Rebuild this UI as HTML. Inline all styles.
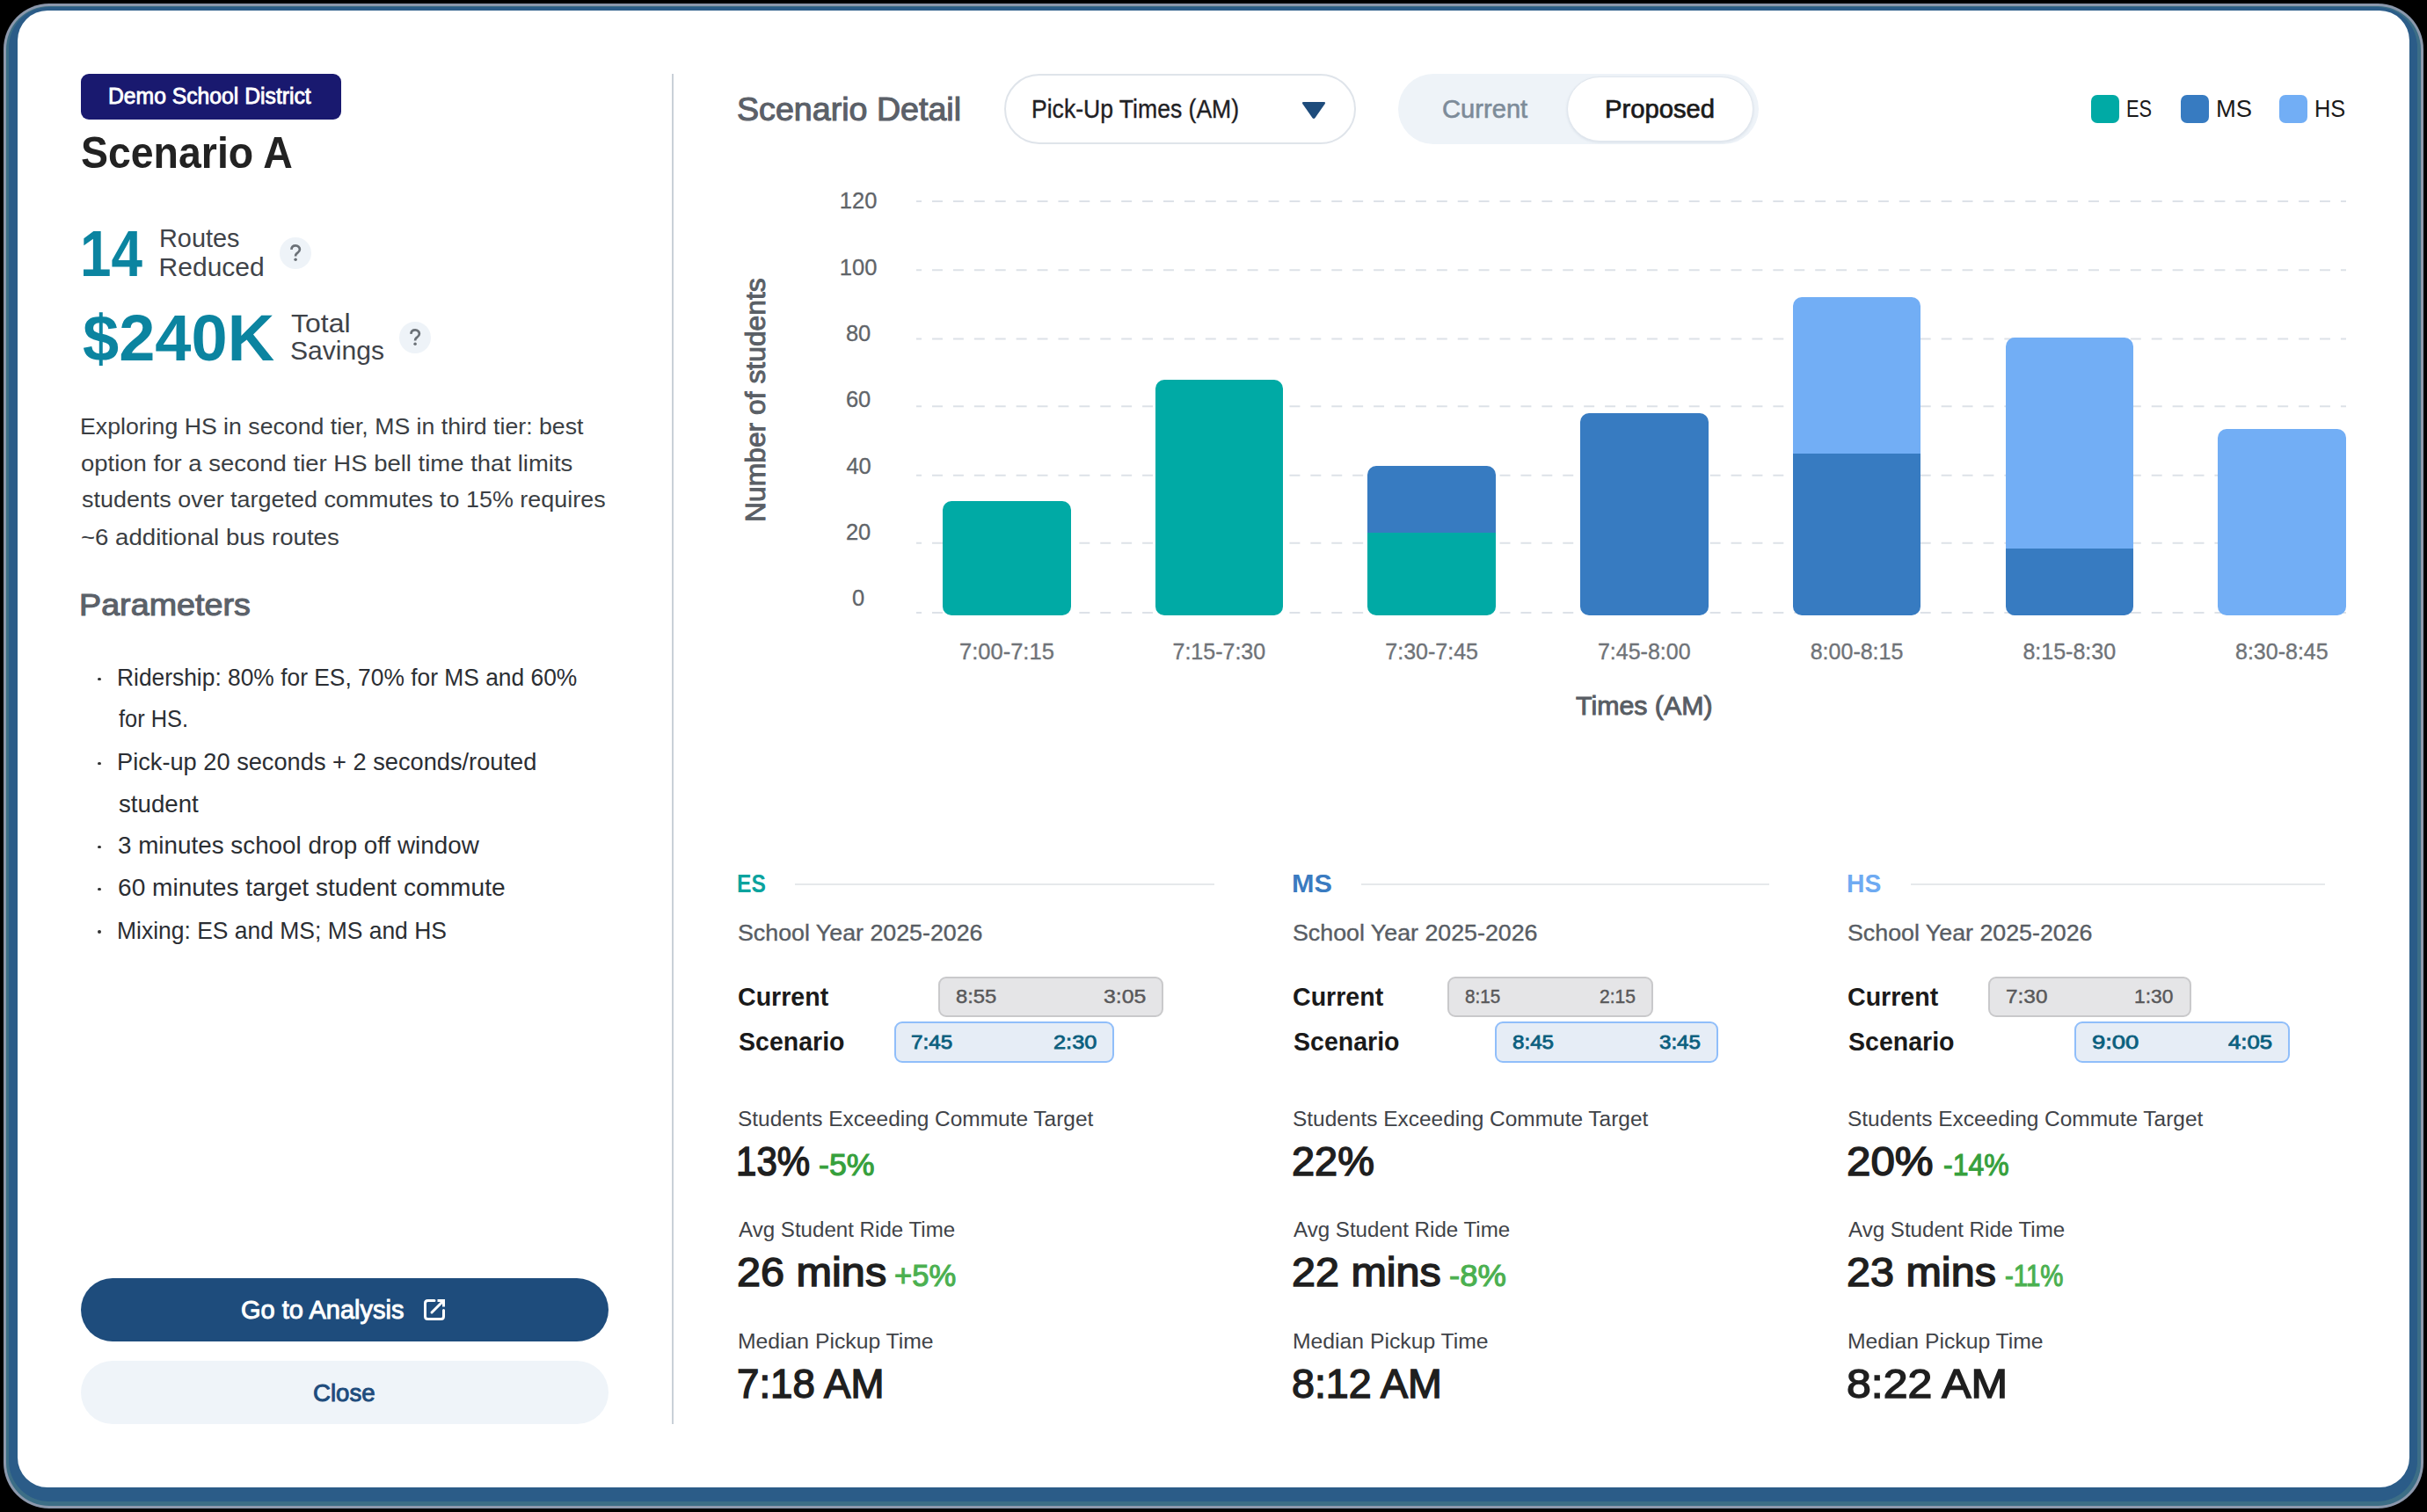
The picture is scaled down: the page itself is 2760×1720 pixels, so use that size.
<!DOCTYPE html>
<html><head><meta charset="utf-8"><style>
html,body{margin:0;padding:0;width:2760px;height:1720px;overflow:hidden;background:#000;}
body{position:relative;font-family:"Liberation Sans", sans-serif;}
</style></head><body>
<div style="position:absolute;left:4px;top:4px;width:2752px;height:1712px;border-radius:52px;background:#8c98ac;"></div>
<div style="position:absolute;left:7px;top:6.5px;width:2746px;height:1706.5px;border-radius:49px;background:#3c6e86;"></div>
<div style="position:absolute;left:10px;top:8px;width:2739px;height:1700px;border-radius:46px;background:#2b5c88;"></div>
<div style="position:absolute;left:20px;top:12px;width:2720px;height:1680px;background:#ffffff;border-radius:34px;"></div>
<div style="position:absolute;left:92px;top:84px;width:296px;height:52px;background:#19196f;border-radius:9px;"></div>
<div style="position:absolute;left:318px;top:270px;width:36px;height:36px;border-radius:18px;background:#eef3f8;"></div>
<div style="position:absolute;left:454px;top:366px;width:36px;height:36px;border-radius:18px;background:#eef3f8;"></div>
<svg style="position:absolute;left:324px;top:276px" width="24" height="24" viewBox="-12 -12 24 24"><path d="M -4.6 -4.2 C -4.4 -7.4 -2.2 -8.6 0.2 -8.6 C 3 -8.6 4.9 -6.7 4.9 -4.2 C 4.9 -1.6 2.6 -0.6 1.2 0.6 C 0.3 1.4 0.1 2.3 0.1 3.6" fill="none" stroke="#6b7177" stroke-width="2.7" stroke-linecap="butt"/><circle cx="0.1" cy="7.3" r="1.75" fill="#6b7177"/></svg>
<svg style="position:absolute;left:460px;top:371.8px" width="24" height="24" viewBox="-12 -12 24 24"><path d="M -4.6 -4.2 C -4.4 -7.4 -2.2 -8.6 0.2 -8.6 C 3 -8.6 4.9 -6.7 4.9 -4.2 C 4.9 -1.6 2.6 -0.6 1.2 0.6 C 0.3 1.4 0.1 2.3 0.1 3.6" fill="none" stroke="#6b7177" stroke-width="2.7" stroke-linecap="butt"/><circle cx="0.1" cy="7.3" r="1.75" fill="#6b7177"/></svg>
<div style="position:absolute;left:111.3px;top:770.5999999999999px;width:3.4px;height:3.4px;border-radius:2px;background:#333;"></div>
<div style="position:absolute;left:111.3px;top:866.5999999999999px;width:3.4px;height:3.4px;border-radius:2px;background:#333;"></div>
<div style="position:absolute;left:111.3px;top:961.8px;width:3.4px;height:3.4px;border-radius:2px;background:#333;"></div>
<div style="position:absolute;left:111.3px;top:1009.9px;width:3.4px;height:3.4px;border-radius:2px;background:#333;"></div>
<div style="position:absolute;left:111.3px;top:1058.3px;width:3.4px;height:3.4px;border-radius:2px;background:#333;"></div>
<div style="position:absolute;left:92px;top:1454px;width:600px;height:72px;background:#1e4c7c;border-radius:36px;"></div>
<svg style="position:absolute;left:480px;top:1476px" width="28" height="28" viewBox="0 0 28 28">
<path d="M14 3.5 H6.5 Q3.5 3.5 3.5 6.5 V21.5 Q3.5 24.5 6.5 24.5 H21.5 Q24.5 24.5 24.5 21.5 V14.5" fill="none" stroke="#fff" stroke-width="3" stroke-linecap="round"/>
<path d="M17.5 3.5 H24.5 V10.5" fill="none" stroke="#fff" stroke-width="3" stroke-linecap="butt"/>
<path d="M11 17 L23.5 4.5" fill="none" stroke="#fff" stroke-width="3" stroke-linecap="round"/>
</svg>
<div style="position:absolute;left:92px;top:1548px;width:600px;height:72px;background:#eff4f9;border-radius:36px;"></div>
<div style="position:absolute;left:764px;top:84px;width:2px;height:1536px;background:#c9d0d8;border-radius:0px;"></div>
<div style="position:absolute;left:1142px;top:84px;width:396px;height:76px;border:2px solid #dfe4ea;border-radius:40px;background:#fff;"></div>
<svg style="position:absolute;left:1478px;top:112px" width="32" height="26" viewBox="0 0 32 26"><path d="M4.5 4 H27.5 Q30 4 28.6 6.2 L17.6 22 Q16 24.2 14.4 22 L3.4 6.2 Q2 4 4.5 4 Z" fill="#1e4c7c"/></svg>
<div style="position:absolute;left:1590px;top:84px;width:410px;height:80px;background:#eef3f8;border-radius:40px;"></div>
<div style="position:absolute;left:1781.5px;top:87px;width:210px;height:71.5px;border:1.5px solid #e1e7ee;border-radius:37px;background:#fff;box-shadow:0 1px 3px rgba(30,60,100,0.10);"></div>
<div style="position:absolute;left:2378px;top:108px;width:32px;height:32px;background:#00aaa5;border-radius:7px;"></div>
<div style="position:absolute;left:2480px;top:108px;width:32px;height:32px;background:#377bc1;border-radius:7px;"></div>
<div style="position:absolute;left:2592px;top:108px;width:32px;height:32px;background:#72aef5;border-radius:7px;"></div>
<svg style="position:absolute;left:1042px;top:227px" width="1626" height="480" viewBox="0 0 1626 480"><g stroke="#dde2e8" stroke-width="2" stroke-dasharray="11.954 11.955" stroke-dashoffset="5.9" fill="none"><line x1="0" y1="2.00" x2="1626" y2="2.00" /><line x1="0" y1="80.20" x2="1626" y2="80.20" /><line x1="0" y1="158.40" x2="1626" y2="158.40" /><line x1="0" y1="235.30" x2="1626" y2="235.30" /><line x1="0" y1="313.70" x2="1626" y2="313.70" /><line x1="0" y1="390.80" x2="1626" y2="390.80" /><line x1="0" y1="470.00" x2="1626" y2="470.00" /></g></svg>
<div style="position:absolute;left:1072.2px;top:569.6px;width:145.6px;height:130.39999999999998px;border-radius:10px;overflow:hidden"><div style="position:absolute;left:0;top:0.0px;width:100%;height:130.39999999999998px;background:#00aaa5"></div></div>
<div style="position:absolute;left:1313.6px;top:431.8px;width:145.6px;height:268.2px;border-radius:10px;overflow:hidden"><div style="position:absolute;left:0;top:0.0px;width:100%;height:268.2px;background:#00aaa5"></div></div>
<div style="position:absolute;left:1555.4px;top:530px;width:145.6px;height:170px;border-radius:10px;overflow:hidden"><div style="position:absolute;left:0;top:0px;width:100%;height:75.60000000000002px;background:#377bc1"></div><div style="position:absolute;left:0;top:75.60000000000002px;width:100%;height:94.39999999999998px;background:#00aaa5"></div></div>
<div style="position:absolute;left:1797px;top:470.1px;width:145.6px;height:229.89999999999998px;border-radius:10px;overflow:hidden"><div style="position:absolute;left:0;top:0.0px;width:100%;height:229.89999999999998px;background:#377bc1"></div></div>
<div style="position:absolute;left:2038.8px;top:338px;width:145.6px;height:362px;border-radius:10px;overflow:hidden"><div style="position:absolute;left:0;top:0px;width:100%;height:178px;background:#72aef5"></div><div style="position:absolute;left:0;top:178px;width:100%;height:184px;background:#377bc1"></div></div>
<div style="position:absolute;left:2280.5px;top:383.8px;width:145.6px;height:316.2px;border-radius:10px;overflow:hidden"><div style="position:absolute;left:0;top:0.0px;width:100%;height:239.90000000000003px;background:#72aef5"></div><div style="position:absolute;left:0;top:239.90000000000003px;width:100%;height:76.29999999999995px;background:#377bc1"></div></div>
<div style="position:absolute;left:2522.1px;top:488.1px;width:145.6px;height:211.89999999999998px;border-radius:10px;overflow:hidden"><div style="position:absolute;left:0;top:0.0px;width:100%;height:211.89999999999998px;background:#72aef5"></div></div>
<div style="position:absolute;left:904px;top:1005px;width:477.29999999999995px;height:2px;background:#e6e8eb;border-radius:0px;"></div>
<div style="position:absolute;left:1066.5px;top:1111px;width:256.0999999999999px;height:46px;box-sizing:border-box;border:2px solid #c9c9cb;border-radius:9px;background:#e5e5e7"></div>
<div style="position:absolute;left:1016.5px;top:1162.3px;width:250.20000000000005px;height:47px;box-sizing:border-box;border:2px solid #90befa;border-radius:9px;background:#e6edf6"></div>
<div style="position:absolute;left:1547.6px;top:1005px;width:464.9000000000001px;height:2px;background:#e6e8eb;border-radius:0px;"></div>
<div style="position:absolute;left:1645.8px;top:1111px;width:234.4000000000001px;height:46px;box-sizing:border-box;border:2px solid #c9c9cb;border-radius:9px;background:#e5e5e7"></div>
<div style="position:absolute;left:1699.7px;top:1162.3px;width:254.0999999999999px;height:47px;box-sizing:border-box;border:2px solid #90befa;border-radius:9px;background:#e6edf6"></div>
<div style="position:absolute;left:2172.7px;top:1005px;width:471.0px;height:2px;background:#e6e8eb;border-radius:0px;"></div>
<div style="position:absolute;left:2261.2px;top:1111px;width:230.4000000000001px;height:46px;box-sizing:border-box;border:2px solid #c9c9cb;border-radius:9px;background:#e5e5e7"></div>
<div style="position:absolute;left:2359.4px;top:1162.3px;width:244.19999999999982px;height:47px;box-sizing:border-box;border:2px solid #90befa;border-radius:9px;background:#e6edf6"></div>
<div style="position:absolute;left:123.05px;top:96.78px;font-size:25.3px;line-height:25.3px;font-weight:400;color:#ffffff;white-space:pre;-webkit-text-stroke:0.85px #ffffff;transform:scaleX(0.9768);transform-origin:0 0;">Demo School District</div>
<div style="position:absolute;left:92.48px;top:149.04px;font-size:50.4px;line-height:50.4px;font-weight:700;color:#222222;white-space:pre;transform:scaleX(0.9215);transform-origin:0 0;">Scenario A</div>
<div style="position:absolute;left:90.53px;top:252.67px;font-size:73.4px;line-height:73.4px;font-weight:700;color:#0b84a0;white-space:pre;transform:scaleX(0.8687);transform-origin:0 0;">14</div>
<div style="position:absolute;left:180.68px;top:256.41px;font-size:30px;line-height:30px;font-weight:400;color:#3f4349;white-space:pre;transform:scaleX(0.9625);transform-origin:0 0;">Routes</div>
<div style="position:absolute;left:180.60px;top:289.00px;font-size:30px;line-height:30px;font-weight:400;color:#3f4349;white-space:pre;transform:scaleX(1.0000);transform-origin:0 0;">Reduced</div>
<div style="position:absolute;left:94.00px;top:347.96px;font-size:74px;line-height:74px;font-weight:700;color:#0b84a0;white-space:pre;transform:scaleX(1.0004);transform-origin:0 0;">$240K</div>
<div style="position:absolute;left:331.00px;top:352.81px;font-size:30px;line-height:30px;font-weight:400;color:#3f4349;white-space:pre;transform:scaleX(1.0664);transform-origin:0 0;">Total</div>
<div style="position:absolute;left:330.00px;top:384.11px;font-size:30px;line-height:30px;font-weight:400;color:#3f4349;white-space:pre;transform:scaleX(1.0026);transform-origin:0 0;">Savings</div>
<div style="position:absolute;left:90.59px;top:471.57px;font-size:26.5px;line-height:26.5px;font-weight:400;color:#3a3e43;white-space:pre;transform:scaleX(1.0068);transform-origin:0 0;">Exploring HS in second tier, MS in third tier: best</div>
<div style="position:absolute;left:91.56px;top:514.07px;font-size:26.5px;line-height:26.5px;font-weight:400;color:#3a3e43;white-space:pre;transform:scaleX(1.0375);transform-origin:0 0;">option for a second tier HS bell time that limits</div>
<div style="position:absolute;left:92.60px;top:555.37px;font-size:26.5px;line-height:26.5px;font-weight:400;color:#3a3e43;white-space:pre;transform:scaleX(1.0160);transform-origin:0 0;">students over targeted commutes to 15% requires</div>
<div style="position:absolute;left:91.56px;top:597.57px;font-size:26.5px;line-height:26.5px;font-weight:400;color:#3a3e43;white-space:pre;transform:scaleX(1.0410);transform-origin:0 0;">~6 additional bus routes</div>
<div style="position:absolute;left:90.49px;top:671.30px;font-size:35.8px;line-height:35.8px;font-weight:400;color:#5b6169;white-space:pre;-webkit-text-stroke:1.1px #5b6169;transform:scaleX(1.0532);transform-origin:0 0;">Parameters</div>
<div style="position:absolute;left:132.89px;top:756.94px;font-size:27.6px;line-height:27.6px;font-weight:400;color:#2b2e33;white-space:pre;transform:scaleX(0.9556);transform-origin:0 0;">Ridership: 80% for ES, 70% for MS and 60%</div>
<div style="position:absolute;left:134.80px;top:804.04px;font-size:27.6px;line-height:27.6px;font-weight:400;color:#2b2e33;white-space:pre;transform:scaleX(0.9204);transform-origin:0 0;">for HS.</div>
<div style="position:absolute;left:132.83px;top:852.94px;font-size:27.6px;line-height:27.6px;font-weight:400;color:#2b2e33;white-space:pre;transform:scaleX(0.9862);transform-origin:0 0;">Pick-up 20 seconds + 2 seconds/routed</div>
<div style="position:absolute;left:134.80px;top:900.54px;font-size:27.6px;line-height:27.6px;font-weight:400;color:#2b2e33;white-space:pre;transform:scaleX(1.0028);transform-origin:0 0;">student</div>
<div style="position:absolute;left:133.79px;top:948.14px;font-size:27.6px;line-height:27.6px;font-weight:400;color:#2b2e33;white-space:pre;transform:scaleX(1.0080);transform-origin:0 0;">3 minutes school drop off window</div>
<div style="position:absolute;left:133.78px;top:996.24px;font-size:27.6px;line-height:27.6px;font-weight:400;color:#2b2e33;white-space:pre;transform:scaleX(1.0186);transform-origin:0 0;">60 minutes target student commute</div>
<div style="position:absolute;left:132.88px;top:1044.64px;font-size:27.6px;line-height:27.6px;font-weight:400;color:#2b2e33;white-space:pre;transform:scaleX(0.9587);transform-origin:0 0;">Mixing: ES and MS; MS and HS</div>
<div style="position:absolute;left:274.00px;top:1475.75px;font-size:29px;line-height:29px;font-weight:400;color:#ffffff;white-space:pre;-webkit-text-stroke:0.95px #ffffff;transform:scaleX(1.0002);transform-origin:0 0;">Go to Analysis</div>
<div style="position:absolute;left:355.63px;top:1569.87px;font-size:28.5px;line-height:28.5px;font-weight:400;color:#1e4c7c;white-space:pre;-webkit-text-stroke:0.95px #1e4c7c;transform:scaleX(0.9702);transform-origin:0 0;">Close</div>
<div style="position:absolute;left:838.48px;top:105.68px;font-size:37px;line-height:37px;font-weight:400;color:#5b6068;white-space:pre;-webkit-text-stroke:1.1px #5b6068;transform:scaleX(1.0166);transform-origin:0 0;">Scenario Detail</div>
<div style="position:absolute;left:1173.47px;top:109.65px;font-size:29px;line-height:29px;font-weight:400;color:#1f2124;white-space:pre;-webkit-text-stroke:0.35px #1f2124;transform:scaleX(0.9158);transform-origin:0 0;">Pick-Up Times (AM)</div>
<div style="position:absolute;left:1640.01px;top:109.03px;font-size:29.5px;line-height:29.5px;font-weight:400;color:#7d8b99;white-space:pre;-webkit-text-stroke:0.6px #7d8b99;transform:scaleX(0.9880);transform-origin:0 0;">Current</div>
<div style="position:absolute;left:1825.02px;top:109.03px;font-size:29.5px;line-height:29.5px;font-weight:400;color:#1a1a1a;white-space:pre;-webkit-text-stroke:0.7px #1a1a1a;transform:scaleX(0.9904);transform-origin:0 0;">Proposed</div>
<div style="position:absolute;left:2418.44px;top:110.10px;font-size:28px;line-height:28px;font-weight:400;color:#1a1a1a;white-space:pre;transform:scaleX(0.7786);transform-origin:0 0;">ES</div>
<div style="position:absolute;left:2519.84px;top:110.10px;font-size:28px;line-height:28px;font-weight:400;color:#1a1a1a;white-space:pre;transform:scaleX(0.9790);transform-origin:0 0;">MS</div>
<div style="position:absolute;left:2632.19px;top:110.10px;font-size:28px;line-height:28px;font-weight:400;color:#1a1a1a;white-space:pre;transform:scaleX(0.9056);transform-origin:0 0;">HS</div>
<div style="position:absolute;left:954.82px;top:216.31px;font-size:25.5px;line-height:25.5px;font-weight:400;color:#606469;white-space:pre;-webkit-text-stroke:0.3px #606469;">120</div>
<div style="position:absolute;left:954.82px;top:291.61px;font-size:25.5px;line-height:25.5px;font-weight:400;color:#606469;white-space:pre;-webkit-text-stroke:0.3px #606469;">100</div>
<div style="position:absolute;left:961.91px;top:366.91px;font-size:25.5px;line-height:25.5px;font-weight:400;color:#606469;white-space:pre;-webkit-text-stroke:0.3px #606469;">80</div>
<div style="position:absolute;left:961.91px;top:442.21px;font-size:25.5px;line-height:25.5px;font-weight:400;color:#606469;white-space:pre;-webkit-text-stroke:0.3px #606469;">60</div>
<div style="position:absolute;left:962.41px;top:517.51px;font-size:25.5px;line-height:25.5px;font-weight:400;color:#606469;white-space:pre;-webkit-text-stroke:0.3px #606469;">40</div>
<div style="position:absolute;left:961.91px;top:592.81px;font-size:25.5px;line-height:25.5px;font-weight:400;color:#606469;white-space:pre;-webkit-text-stroke:0.3px #606469;">20</div>
<div style="position:absolute;left:969.00px;top:668.11px;font-size:25.5px;line-height:25.5px;font-weight:400;color:#606469;white-space:pre;-webkit-text-stroke:0.3px #606469;">0</div>
<div style="position:absolute;left:843.96px;top:594.25px;font-size:31px;line-height:31px;font-weight:400;color:#5a5f66;white-space:pre;transform-origin:0 0;transform:rotate(-90deg) scaleX(1.0268);-webkit-text-stroke:0.95px #5a5f66;">Number of students</div>
<div style="position:absolute;left:1091.03px;top:728.64px;font-size:25px;line-height:25px;font-weight:400;color:#6f7378;white-space:pre;-webkit-text-stroke:0.35px #6f7378;transform:scaleX(1.0209);transform-origin:0 0;">7:00-7:15</div>
<div style="position:absolute;left:1333.53px;top:728.64px;font-size:25px;line-height:25px;font-weight:400;color:#6f7378;white-space:pre;-webkit-text-stroke:0.35px #6f7378;">7:15-7:30</div>
<div style="position:absolute;left:1575.33px;top:728.64px;font-size:25px;line-height:25px;font-weight:400;color:#6f7378;white-space:pre;-webkit-text-stroke:0.35px #6f7378;">7:30-7:45</div>
<div style="position:absolute;left:1816.93px;top:728.64px;font-size:25px;line-height:25px;font-weight:400;color:#6f7378;white-space:pre;-webkit-text-stroke:0.35px #6f7378;">7:45-8:00</div>
<div style="position:absolute;left:2058.73px;top:728.64px;font-size:25px;line-height:25px;font-weight:400;color:#6f7378;white-space:pre;-webkit-text-stroke:0.35px #6f7378;">8:00-8:15</div>
<div style="position:absolute;left:2300.43px;top:728.64px;font-size:25px;line-height:25px;font-weight:400;color:#6f7378;white-space:pre;-webkit-text-stroke:0.35px #6f7378;">8:15-8:30</div>
<div style="position:absolute;left:2542.03px;top:728.64px;font-size:25px;line-height:25px;font-weight:400;color:#6f7378;white-space:pre;-webkit-text-stroke:0.35px #6f7378;">8:30-8:45</div>
<div style="position:absolute;left:1792.25px;top:788.40px;font-size:30px;line-height:30px;font-weight:400;color:#585d64;white-space:pre;-webkit-text-stroke:0.95px #585d64;transform:scaleX(1.0106);transform-origin:0 0;">Times (AM)</div>
<div style="position:absolute;left:838.16px;top:990.31px;font-size:30px;line-height:30px;font-weight:700;color:#0aa39e;white-space:pre;transform:scaleX(0.8214);transform-origin:0 0;">ES</div>
<div style="position:absolute;left:838.73px;top:1048.84px;font-size:25px;line-height:25px;font-weight:400;color:#585d64;white-space:pre;-webkit-text-stroke:0.35px #585d64;transform:scaleX(1.0712);transform-origin:0 0;">School Year 2025-2026</div>
<div style="position:absolute;left:838.81px;top:1119.92px;font-size:28.8px;line-height:28.8px;font-weight:700;color:#1a1a1a;white-space:pre;transform:scaleX(0.9922);transform-origin:0 0;">Current</div>
<div style="position:absolute;left:839.80px;top:1171.32px;font-size:28.8px;line-height:28.8px;font-weight:700;color:#1a1a1a;white-space:pre;transform:scaleX(0.9905);transform-origin:0 0;">Scenario</div>
<div style="position:absolute;left:1087.00px;top:1122.08px;font-size:22.7px;line-height:22.7px;font-weight:400;color:#58585a;white-space:pre;-webkit-text-stroke:0.45px #58585a;transform:scaleX(1.0496);transform-origin:0 0;">8:55</div>
<div style="position:absolute;left:1254.50px;top:1122.08px;font-size:22.7px;line-height:22.7px;font-weight:400;color:#58585a;white-space:pre;-webkit-text-stroke:0.45px #58585a;transform:scaleX(1.0933);transform-origin:0 0;">3:05</div>
<div style="position:absolute;left:1035.93px;top:1173.98px;font-size:22.7px;line-height:22.7px;font-weight:400;color:#0b5f7e;white-space:pre;-webkit-text-stroke:0.8px #0b5f7e;transform:scaleX(1.0696);transform-origin:0 0;">7:45</div>
<div style="position:absolute;left:1197.58px;top:1173.98px;font-size:22.7px;line-height:22.7px;font-weight:400;color:#0b5f7e;white-space:pre;-webkit-text-stroke:0.8px #0b5f7e;transform:scaleX(1.1166);transform-origin:0 0;">2:30</div>
<div style="position:absolute;left:838.75px;top:1262.38px;font-size:23.3px;line-height:23.3px;font-weight:400;color:#3f4348;white-space:pre;transform:scaleX(1.0487);transform-origin:0 0;">Students Exceeding Commute Target</div>
<div style="position:absolute;left:837.09px;top:1298.44px;font-size:46.5px;line-height:46.5px;font-weight:400;color:#1f1f1f;white-space:pre;-webkit-text-stroke:1.5px #1f1f1f;transform:scaleX(0.9039);transform-origin:0 0;">13%</div>
<div style="position:absolute;left:930.69px;top:1307.75px;font-size:35.5px;line-height:35.5px;font-weight:400;color:#36a03c;white-space:pre;-webkit-text-stroke:1.1px #36a03c;transform:scaleX(1.0071);transform-origin:0 0;">-5%</div>
<div style="position:absolute;left:839.80px;top:1387.78px;font-size:23.3px;line-height:23.3px;font-weight:400;color:#3f4348;white-space:pre;transform:scaleX(1.0349);transform-origin:0 0;">Avg Student Ride Time</div>
<div style="position:absolute;left:837.71px;top:1424.44px;font-size:46.5px;line-height:46.5px;font-weight:400;color:#1f1f1f;white-space:pre;-webkit-text-stroke:1.5px #1f1f1f;transform:scaleX(1.0453);transform-origin:0 0;">26 mins</div>
<div style="position:absolute;left:1016.83px;top:1433.75px;font-size:35.5px;line-height:35.5px;font-weight:400;color:#4bb050;white-space:pre;-webkit-text-stroke:1.1px #4bb050;transform:scaleX(0.9748);transform-origin:0 0;">+5%</div>
<div style="position:absolute;left:838.74px;top:1514.58px;font-size:23.3px;line-height:23.3px;font-weight:400;color:#3f4348;white-space:pre;transform:scaleX(1.0613);transform-origin:0 0;">Median Pickup Time</div>
<div style="position:absolute;left:837.84px;top:1550.64px;font-size:46.5px;line-height:46.5px;font-weight:400;color:#1f1f1f;white-space:pre;-webkit-text-stroke:1.5px #1f1f1f;transform:scaleX(0.9819);transform-origin:0 0;">7:18 AM</div>
<div style="position:absolute;left:1468.96px;top:990.31px;font-size:30px;line-height:30px;font-weight:700;color:#3a7bc1;white-space:pre;transform:scaleX(1.0193);transform-origin:0 0;">MS</div>
<div style="position:absolute;left:1469.93px;top:1048.84px;font-size:25px;line-height:25px;font-weight:400;color:#585d64;white-space:pre;-webkit-text-stroke:0.35px #585d64;transform:scaleX(1.0712);transform-origin:0 0;">School Year 2025-2026</div>
<div style="position:absolute;left:1470.01px;top:1119.92px;font-size:28.8px;line-height:28.8px;font-weight:700;color:#1a1a1a;white-space:pre;transform:scaleX(0.9922);transform-origin:0 0;">Current</div>
<div style="position:absolute;left:1471.00px;top:1171.32px;font-size:28.8px;line-height:28.8px;font-weight:700;color:#1a1a1a;white-space:pre;transform:scaleX(0.9905);transform-origin:0 0;">Scenario</div>
<div style="position:absolute;left:1666.30px;top:1122.08px;font-size:22.7px;line-height:22.7px;font-weight:400;color:#58585a;white-space:pre;-webkit-text-stroke:0.45px #58585a;transform:scaleX(0.9095);transform-origin:0 0;">8:15</div>
<div style="position:absolute;left:1819.37px;top:1122.08px;font-size:22.7px;line-height:22.7px;font-weight:400;color:#58585a;white-space:pre;-webkit-text-stroke:0.45px #58585a;transform:scaleX(0.9262);transform-origin:0 0;">2:15</div>
<div style="position:absolute;left:1720.20px;top:1173.98px;font-size:22.7px;line-height:22.7px;font-weight:400;color:#0b5f7e;white-space:pre;-webkit-text-stroke:0.8px #0b5f7e;transform:scaleX(1.0657);transform-origin:0 0;">8:45</div>
<div style="position:absolute;left:1887.00px;top:1173.98px;font-size:22.7px;line-height:22.7px;font-weight:400;color:#0b5f7e;white-space:pre;-webkit-text-stroke:0.8px #0b5f7e;transform:scaleX(1.0634);transform-origin:0 0;">3:45</div>
<div style="position:absolute;left:1469.95px;top:1262.38px;font-size:23.3px;line-height:23.3px;font-weight:400;color:#3f4348;white-space:pre;transform:scaleX(1.0487);transform-origin:0 0;">Students Exceeding Commute Target</div>
<div style="position:absolute;left:1468.98px;top:1298.44px;font-size:46.5px;line-height:46.5px;font-weight:400;color:#1f1f1f;white-space:pre;-webkit-text-stroke:1.5px #1f1f1f;transform:scaleX(1.0098);transform-origin:0 0;">22%</div>
<div style="position:absolute;left:1471.00px;top:1387.78px;font-size:23.3px;line-height:23.3px;font-weight:400;color:#3f4348;white-space:pre;transform:scaleX(1.0349);transform-origin:0 0;">Avg Student Ride Time</div>
<div style="position:absolute;left:1468.91px;top:1424.44px;font-size:46.5px;line-height:46.5px;font-weight:400;color:#1f1f1f;white-space:pre;-webkit-text-stroke:1.5px #1f1f1f;transform:scaleX(1.0428);transform-origin:0 0;">22 mins</div>
<div style="position:absolute;left:1647.57px;top:1433.75px;font-size:35.5px;line-height:35.5px;font-weight:400;color:#4bb050;white-space:pre;-webkit-text-stroke:1.1px #4bb050;transform:scaleX(1.0266);transform-origin:0 0;">-8%</div>
<div style="position:absolute;left:1469.94px;top:1514.58px;font-size:23.3px;line-height:23.3px;font-weight:400;color:#3f4348;white-space:pre;transform:scaleX(1.0613);transform-origin:0 0;">Median Pickup Time</div>
<div style="position:absolute;left:1469.00px;top:1550.64px;font-size:46.5px;line-height:46.5px;font-weight:400;color:#1f1f1f;white-space:pre;-webkit-text-stroke:1.5px #1f1f1f;transform:scaleX(1.0016);transform-origin:0 0;">8:12 AM</div>
<div style="position:absolute;left:2100.32px;top:990.31px;font-size:30px;line-height:30px;font-weight:700;color:#6eaaf2;white-space:pre;transform:scaleX(0.9414);transform-origin:0 0;">HS</div>
<div style="position:absolute;left:2101.13px;top:1048.84px;font-size:25px;line-height:25px;font-weight:400;color:#585d64;white-space:pre;-webkit-text-stroke:0.35px #585d64;transform:scaleX(1.0712);transform-origin:0 0;">School Year 2025-2026</div>
<div style="position:absolute;left:2101.21px;top:1119.92px;font-size:28.8px;line-height:28.8px;font-weight:700;color:#1a1a1a;white-space:pre;transform:scaleX(0.9922);transform-origin:0 0;">Current</div>
<div style="position:absolute;left:2102.20px;top:1171.32px;font-size:28.8px;line-height:28.8px;font-weight:700;color:#1a1a1a;white-space:pre;transform:scaleX(0.9905);transform-origin:0 0;">Scenario</div>
<div style="position:absolute;left:2280.63px;top:1122.08px;font-size:22.7px;line-height:22.7px;font-weight:400;color:#58585a;white-space:pre;-webkit-text-stroke:0.45px #58585a;transform:scaleX(1.0743);transform-origin:0 0;">7:30</div>
<div style="position:absolute;left:2427.40px;top:1122.08px;font-size:22.7px;line-height:22.7px;font-weight:400;color:#58585a;white-space:pre;-webkit-text-stroke:0.45px #58585a;transform:scaleX(1.0038);transform-origin:0 0;">1:30</div>
<div style="position:absolute;left:2378.69px;top:1173.98px;font-size:22.7px;line-height:22.7px;font-weight:400;color:#0b5f7e;white-space:pre;-webkit-text-stroke:0.8px #0b5f7e;transform:scaleX(1.2083);transform-origin:0 0;">9:00</div>
<div style="position:absolute;left:2533.70px;top:1173.98px;font-size:22.7px;line-height:22.7px;font-weight:400;color:#0b5f7e;white-space:pre;-webkit-text-stroke:0.8px #0b5f7e;transform:scaleX(1.1346);transform-origin:0 0;">4:05</div>
<div style="position:absolute;left:2101.15px;top:1262.38px;font-size:23.3px;line-height:23.3px;font-weight:400;color:#3f4348;white-space:pre;transform:scaleX(1.0487);transform-origin:0 0;">Students Exceeding Commute Target</div>
<div style="position:absolute;left:2100.08px;top:1298.44px;font-size:46.5px;line-height:46.5px;font-weight:400;color:#1f1f1f;white-space:pre;-webkit-text-stroke:1.5px #1f1f1f;transform:scaleX(1.0599);transform-origin:0 0;">20%</div>
<div style="position:absolute;left:2209.70px;top:1307.75px;font-size:35.5px;line-height:35.5px;font-weight:400;color:#36a03c;white-space:pre;-webkit-text-stroke:1.1px #36a03c;transform:scaleX(0.9003);transform-origin:0 0;">-14%</div>
<div style="position:absolute;left:2102.20px;top:1387.78px;font-size:23.3px;line-height:23.3px;font-weight:400;color:#3f4348;white-space:pre;transform:scaleX(1.0349);transform-origin:0 0;">Avg Student Ride Time</div>
<div style="position:absolute;left:2100.11px;top:1424.44px;font-size:46.5px;line-height:46.5px;font-weight:400;color:#1f1f1f;white-space:pre;-webkit-text-stroke:1.5px #1f1f1f;transform:scaleX(1.0434);transform-origin:0 0;">23 mins</div>
<div style="position:absolute;left:2279.87px;top:1433.75px;font-size:35.5px;line-height:35.5px;font-weight:400;color:#4bb050;white-space:pre;-webkit-text-stroke:1.1px #4bb050;transform:scaleX(0.8287);transform-origin:0 0;">-11%</div>
<div style="position:absolute;left:2101.14px;top:1514.58px;font-size:23.3px;line-height:23.3px;font-weight:400;color:#3f4348;white-space:pre;transform:scaleX(1.0613);transform-origin:0 0;">Median Pickup Time</div>
<div style="position:absolute;left:2100.05px;top:1550.64px;font-size:46.5px;line-height:46.5px;font-weight:400;color:#1f1f1f;white-space:pre;-webkit-text-stroke:1.5px #1f1f1f;transform:scaleX(1.0738);transform-origin:0 0;">8:22 AM</div>
</body></html>
